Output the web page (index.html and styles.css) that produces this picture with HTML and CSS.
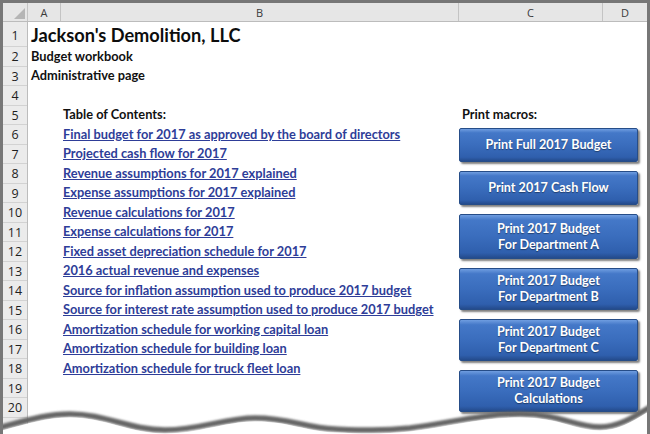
FILE: index.html
```html
<!DOCTYPE html>
<html lang="en">
<head>
    <meta charset="UTF-8">
    <meta name="viewport" content="width=device-width, initial-scale=1.0">
    <title>Budget workbook - Administrative page</title>
    <link rel="stylesheet" href="styles.css">
</head>
<body>

<div class="frame">
    <div class="colhead">
        <div class="corner"><span class="corner-tri"></span></div>
        <div class="ch col-a">A</div>
        <div class="ch col-b">B</div>
        <div class="ch col-c">C</div>
        <div class="ch col-d">D</div>
    </div>

    <div class="sheet">
        <div class="rownums">
            <div class="rn first">1</div>
            <div class="rn">2</div>
            <div class="rn">3</div>
            <div class="rn">4</div>
            <div class="rn">5</div>
            <div class="rn">6</div>
            <div class="rn">7</div>
            <div class="rn">8</div>
            <div class="rn">9</div>
            <div class="rn">10</div>
            <div class="rn">11</div>
            <div class="rn">12</div>
            <div class="rn">13</div>
            <div class="rn">14</div>
            <div class="rn">15</div>
            <div class="rn">16</div>
            <div class="rn">17</div>
            <div class="rn">18</div>
            <div class="rn">19</div>
            <div class="rn">20</div>
            <div class="rn"></div>
        </div>

        <div class="cells">
            <div class="contents">
                <div class="row first"><span class="title">Jackson's Demolition, LLC</span></div>
                <div class="row"><span class="sub">Budget workbook</span></div>
                <div class="row"><span class="sub">Administrative page</span></div>
                <div class="row"></div>
                <div class="row in-b"><span class="heading">Table of Contents:</span></div>
                <div class="row in-b"><a href="#">Final budget for 2017 as approved by the board of directors</a></div>
                <div class="row in-b"><a href="#">Projected cash flow for 2017</a></div>
                <div class="row in-b"><a href="#">Revenue assumptions for 2017 explained</a></div>
                <div class="row in-b"><a href="#">Expense assumptions for 2017 explained</a></div>
                <div class="row in-b"><a href="#">Revenue calculations for 2017</a></div>
                <div class="row in-b"><a href="#">Expense calculations for 2017</a></div>
                <div class="row in-b"><a href="#">Fixed asset depreciation schedule for 2017</a></div>
                <div class="row in-b"><a href="#">2016 actual revenue and expenses</a></div>
                <div class="row in-b"><a href="#">Source for inflation assumption used to produce 2017 budget</a></div>
                <div class="row in-b"><a href="#">Source for interest rate assumption used to produce 2017 budget</a></div>
                <div class="row in-b"><a href="#">Amortization schedule for working capital loan</a></div>
                <div class="row in-b"><a href="#">Amortization schedule for building loan</a></div>
                <div class="row in-b"><a href="#">Amortization schedule for truck fleet loan</a></div>
            </div>

            <div class="macros">
                <div class="macros-label">Print macros:</div>
                <div class="buttons">
                    <button class="macro">Print Full 2017 Budget</button>
                    <button class="macro">Print 2017 Cash Flow</button>
                    <button class="macro tall">Print 2017 Budget<br>For Department A</button>
                    <button class="macro double">Print 2017 Budget<br>For Department B</button>
                    <button class="macro double">Print 2017 Budget<br>For Department C</button>
                    <button class="macro double">Print 2017 Budget<br>Calculations</button>
                </div>
            </div>
        </div>
    </div>

    <!-- torn paper edge at the bottom -->
    <svg class="tear" width="650" height="44" viewBox="0 390 650 44">
        <defs>
            <filter id="soft" x="-5%" y="-50%" width="110%" height="200%">
                <feGaussianBlur stdDeviation="0.9"/>
            </filter>
        </defs>
        <path d="M-2,428 C25,421 45,414 70,414 C105,414 130,430 165,430 C200,430 225,418 255,418 C290,418 305,428 335,429 C360,430 380,431 410,428 C450,423 480,414 520,414 C560,414 575,427 600,427 C620,427 635,416 652,406"
              fill="none" stroke="#666666" stroke-width="5.5" filter="url(#soft)"/>
        <path d="M-2,431.5 C25,424.5 45,417.5 70,417.5 C105,417.5 130,433.5 165,433.5 C200,433.5 225,421.5 255,421.5 C290,421.5 305,431.5 335,432.5 C360,433.5 380,434.5 410,431.5 C450,426.5 480,417.5 520,417.5 C560,417.5 575,430.5 600,430.5 C620,430.5 635,419.5 652,409.5 L652,440 L-2,440 Z"
              fill="#ffffff"/>
    </svg>
</div>

</body>
</html>
```

FILE: styles.css
```css
body {
    margin: 0;
    background-color: #ffffff;
}
.frame {
    position: relative;
    width: 650px;
    height: 434px;
    box-sizing: border-box;
    border-top: 3px solid #777777;
    border-left: 3px solid #777777;
    border-right: 3px solid #777777;
    background-color: #ffffff;
    overflow: hidden;
    font-family: "Lato", "Open Sans", sans-serif;
}

/* column header */
.colhead {
    display: flex;
    height: 19px;
    background-color: #e6e6e6;
    border-bottom: 1px solid #bcbcbc;
    box-sizing: border-box;
    font-family: "Open Sans", sans-serif;
    font-size: 11px;
    color: #3a3a3a;
}
.corner {
    position: relative;
    width: 25px;
    border-right: 1px solid #c4c4c4;
    box-sizing: border-box;
}
.corner-tri {
    position: absolute;
    right: 2px;
    bottom: 2px;
    width: 0;
    height: 0;
    border-left: 11px solid transparent;
    border-bottom: 11px solid #b5b5b5;
}
.ch {
    display: flex;
    align-items: center;
    justify-content: center;
    border-right: 1px solid #c4c4c4;
    box-sizing: border-box;
}
.col-a { width: 33px; }
.col-b { width: 398px; }
.col-c { width: 144px; }
.col-d { width: 44px; border-right: none; }

/* sheet body */
.sheet {
    display: flex;
}
.rownums {
    width: 25px;
    flex-shrink: 0;
    background-color: #ebebeb;
    border-right: 1px solid #bcbcbc;
    box-sizing: border-box;
    font-family: "Open Sans", sans-serif;
    font-size: 12.5px;
    color: #1e1e1e;
}
.rn {
    height: 19.5px;
    display: flex;
    align-items: center;
    justify-content: center;
    border-bottom: 1px solid #d2d2d2;
    box-sizing: border-box;
    padding-top: 1px;
}
.rn.first {
    height: 25px;
    padding-top: 3px;
}

.cells {
    display: flex;
    flex: 1;
}
.contents {
    width: 431px;
    flex-shrink: 0;
}
.row {
    height: 19.5px;
    display: flex;
    align-items: flex-end;
    padding-left: 3px;
    padding-bottom: 3px;
    box-sizing: border-box;
    white-space: nowrap;
    font-size: 12.8px;
    font-weight: 700;
    color: #111111;
}
.row.first {
    height: 25px;
    padding-bottom: 1px;
}
.row.in-b {
    padding-left: 35px;
}
.title {
    font-size: 18.2px;
    font-weight: 700;
    color: #0d0d0d;
}
.sub, .heading {
    font-size: 12.8px;
}
.row a {
    color: #2e3d98;
    text-decoration: underline;
    text-underline-offset: 1px;
}

/* print macro buttons */
.macros {
    width: 188px;
    flex-shrink: 0;
}
.macros-label {
    margin-top: 83.5px;
    height: 19.5px;
    display: flex;
    align-items: flex-end;
    padding-left: 3px;
    padding-bottom: 3px;
    box-sizing: border-box;
    font-size: 12.8px;
    font-weight: 700;
    color: #111111;
}
.buttons {
    display: flex;
    flex-direction: column;
    gap: 9px;
    margin-top: 3px;
}
.macro {
    width: 179px;
    height: 34px;
    padding: 0;
    border: 1px solid #264d88;
    border-radius: 2px;
    background: linear-gradient(#6f9de0 0%, #4478c8 12%, #3a6dbd 50%, #2f5fad 88%, #244b8c 100%);
    box-shadow: 2px 2px 2px rgba(0, 0, 0, 0.5);
    color: #ffffff;
    font-family: "Lato", "Open Sans", sans-serif;
    font-size: 12.6px;
    font-weight: 700;
    line-height: 16px;
    text-shadow: 0 1px 1px rgba(0, 0, 0, 0.4);
    cursor: pointer;
}
.macro.tall {
    height: 45px;
}
.macro.double {
    height: 42px;
}

.tear {
    position: absolute;
    left: -3px;
    bottom: 0;
}
```
